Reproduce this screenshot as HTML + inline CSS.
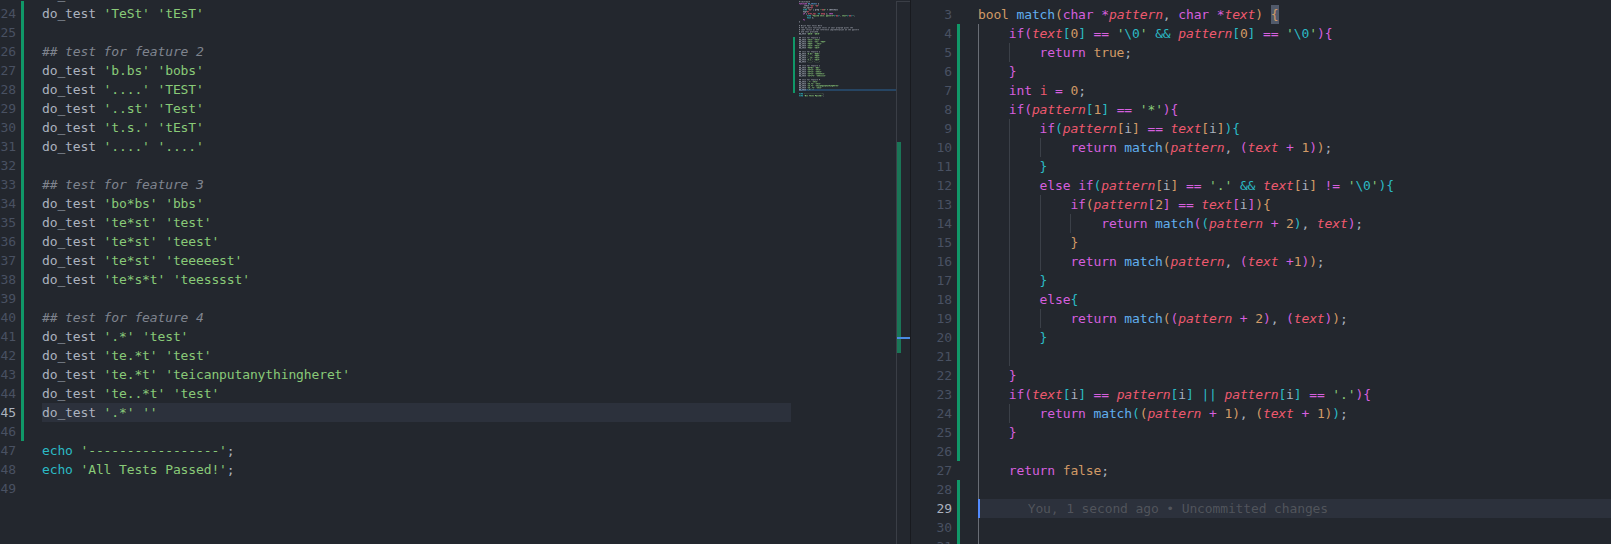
<!DOCTYPE html>
<html lang="en">
<head>
<meta charset="utf-8">
<title>editor</title>
<style>
html,body{margin:0;padding:0;}
body{width:1611px;height:544px;overflow:hidden;background:#23272e;position:relative;
 font-family:"DejaVu Sans Mono","Liberation Mono",monospace;font-size:13px;letter-spacing:-0.127px;color:#abb2bf;}
.abs{position:absolute;}
.ln{position:absolute;height:19px;line-height:19px;white-space:pre;}
.num{color:#495162;text-align:right;}
.num.act{color:#abb2bf;}
.s{color:#89ca78}.c{color:#7f848e;font-style:italic}.e{color:#2bbac5}.k{color:#d55fde}
.f{color:#61afef}.v{color:#ef596f;font-style:italic}.r{color:#ef596f}.n{color:#d19a66}
.b1{color:#d19a66}.b2{color:#d55fde}.b3{color:#2bbac5}
.g{background:#109868;position:absolute;width:3px;}
.ig{position:absolute;width:1px;background:#3b4048;}
.ig.a{background:#696d75;}
.blame{color:rgba(153,153,153,0.35);}
</style>
</head>
<body>
<!-- left editor -->
<div class="abs" style="left:42px;top:403px;width:749px;height:19px;background:#2c313c"></div>
<div class="g" style="left:21px;top:1px;height:440px"></div>
<div class="ln num" style="left:0;width:16px;top:-15px">23</div><div class="ln" style="left:42px;top:-15px">do_test <span class="s">'tesT'</span> <span class="s">'Test'</span></div>
<div class="ln num" style="left:0;width:16px;top:4px">24</div><div class="ln" style="left:42px;top:4px">do_test <span class="s">'TeSt'</span> <span class="s">'tEsT'</span></div>
<div class="ln num" style="left:0;width:16px;top:23px">25</div><div class="ln" style="left:42px;top:23px"></div>
<div class="ln num" style="left:0;width:16px;top:42px">26</div><div class="ln" style="left:42px;top:42px"><span class="c">## test for feature 2</span></div>
<div class="ln num" style="left:0;width:16px;top:61px">27</div><div class="ln" style="left:42px;top:61px">do_test <span class="s">'b.bs'</span> <span class="s">'bobs'</span></div>
<div class="ln num" style="left:0;width:16px;top:80px">28</div><div class="ln" style="left:42px;top:80px">do_test <span class="s">'....'</span> <span class="s">'TEST'</span></div>
<div class="ln num" style="left:0;width:16px;top:99px">29</div><div class="ln" style="left:42px;top:99px">do_test <span class="s">'..st'</span> <span class="s">'Test'</span></div>
<div class="ln num" style="left:0;width:16px;top:118px">30</div><div class="ln" style="left:42px;top:118px">do_test <span class="s">'t.s.'</span> <span class="s">'tEsT'</span></div>
<div class="ln num" style="left:0;width:16px;top:137px">31</div><div class="ln" style="left:42px;top:137px">do_test <span class="s">'....'</span> <span class="s">'....'</span></div>
<div class="ln num" style="left:0;width:16px;top:156px">32</div><div class="ln" style="left:42px;top:156px"></div>
<div class="ln num" style="left:0;width:16px;top:175px">33</div><div class="ln" style="left:42px;top:175px"><span class="c">## test for feature 3</span></div>
<div class="ln num" style="left:0;width:16px;top:194px">34</div><div class="ln" style="left:42px;top:194px">do_test <span class="s">'bo*bs'</span> <span class="s">'bbs'</span></div>
<div class="ln num" style="left:0;width:16px;top:213px">35</div><div class="ln" style="left:42px;top:213px">do_test <span class="s">'te*st'</span> <span class="s">'test'</span></div>
<div class="ln num" style="left:0;width:16px;top:232px">36</div><div class="ln" style="left:42px;top:232px">do_test <span class="s">'te*st'</span> <span class="s">'teest'</span></div>
<div class="ln num" style="left:0;width:16px;top:251px">37</div><div class="ln" style="left:42px;top:251px">do_test <span class="s">'te*st'</span> <span class="s">'teeeeest'</span></div>
<div class="ln num" style="left:0;width:16px;top:270px">38</div><div class="ln" style="left:42px;top:270px">do_test <span class="s">'te*s*t'</span> <span class="s">'teesssst'</span></div>
<div class="ln num" style="left:0;width:16px;top:289px">39</div><div class="ln" style="left:42px;top:289px"></div>
<div class="ln num" style="left:0;width:16px;top:308px">40</div><div class="ln" style="left:42px;top:308px"><span class="c">## test for feature 4</span></div>
<div class="ln num" style="left:0;width:16px;top:327px">41</div><div class="ln" style="left:42px;top:327px">do_test <span class="s">'.*'</span> <span class="s">'test'</span></div>
<div class="ln num" style="left:0;width:16px;top:346px">42</div><div class="ln" style="left:42px;top:346px">do_test <span class="s">'te.*t'</span> <span class="s">'test'</span></div>
<div class="ln num" style="left:0;width:16px;top:365px">43</div><div class="ln" style="left:42px;top:365px">do_test <span class="s">'te.*t'</span> <span class="s">'teicanputanythingheret'</span></div>
<div class="ln num" style="left:0;width:16px;top:384px">44</div><div class="ln" style="left:42px;top:384px">do_test <span class="s">'te..*t'</span> <span class="s">'test'</span></div>
<div class="ln num act" style="left:0;width:16px;top:403px">45</div><div class="ln" style="left:42px;top:403px">do_test <span class="s">'.*'</span> <span class="s">''</span></div>
<div class="ln num" style="left:0;width:16px;top:422px">46</div><div class="ln" style="left:42px;top:422px"></div>
<div class="ln num" style="left:0;width:16px;top:441px">47</div><div class="ln" style="left:42px;top:441px"><span class="e">echo</span> <span class="s">'-----------------'</span>;</div>
<div class="ln num" style="left:0;width:16px;top:460px">48</div><div class="ln" style="left:42px;top:460px"><span class="e">echo</span> <span class="s">'All Tests Passed!'</span>;</div>
<div class="ln num" style="left:0;width:16px;top:479px">49</div><div class="ln" style="left:42px;top:479px"></div>
<!-- minimap -->
<svg class="abs" style="left:0;top:0" width="911" height="544" shape-rendering="crispEdges">
<rect x="799" y="89" width="97" height="2" fill="#264563"/>
<g>
<path fill="#2bbac5" fill-opacity="0.1" d="M817 13h1v1h-1z"/>
<path fill="#2bbac5" fill-opacity="0.2" d="M803 10h3v1h-3zM818 14h2v1h-2zM807 16h3v1h-3zM834 16h1v1h-1zM838 16h1v1h-1zM847 16h1v1h-1zM851 16h1v1h-1zM807 18h1v1h-1zM810 18h1v1h-1zM799 94h3v1h-3zM799 96h3v1h-3z"/>
<path fill="#2bbac5" fill-opacity="0.3" d="M806 10h1v1h-1zM835 15h1v1h-1zM839 15h1v1h-1zM848 15h1v1h-1zM852 15h1v1h-1zM810 16h1v1h-1zM808 18h2v1h-2zM802 94h1v1h-1zM802 96h1v1h-1z"/>
<path fill="#2bbac5" fill-opacity="0.4" d="M804 9h1v1h-1zM808 15h1v1h-1zM834 15h1v1h-1zM838 15h1v1h-1zM847 15h1v1h-1zM851 15h1v1h-1zM809 17h1v1h-1zM800 93h1v1h-1zM800 95h1v1h-1z"/>
<path fill="#2bbac5" fill-opacity="0.5" d="M808 17h1v1h-1zM810 17h1v1h-1z"/>
<path fill="#2bbac5" fill-opacity="0.6" d="M803 9h1v1h-1zM806 9h1v1h-1zM818 13h2v1h-2zM807 15h1v1h-1zM810 15h1v1h-1zM807 17h1v1h-1zM799 93h1v1h-1zM802 93h1v1h-1zM799 95h1v1h-1zM802 95h1v1h-1z"/>
<path fill="#2bbac5" fill-opacity="0.7" d="M805 9h1v1h-1zM809 15h1v1h-1zM801 93h1v1h-1zM801 95h1v1h-1z"/>
<path fill="#61afef" fill-opacity="0.2" d="M811 4h6v1h-6z"/>
<path fill="#61afef" fill-opacity="0.3" d="M808 4h3v1h-3z"/>
<path fill="#61afef" fill-opacity="0.4" d="M813 3h1v1h-1zM815 3h2v1h-2z"/>
<path fill="#61afef" fill-opacity="0.5" d="M811 3h1v1h-1zM814 3h1v1h-1z"/>
<path fill="#61afef" fill-opacity="0.6" d="M809 3h1v1h-1zM812 3h1v1h-1z"/>
<path fill="#61afef" fill-opacity="0.7" d="M808 3h1v1h-1z"/>
<path fill="#7f848e" fill-opacity="0.1" d="M800 2h1v1h-1zM802 26h1v1h-1zM807 26h1v1h-1zM810 26h1v1h-1zM812 26h1v1h-1zM820 26h1v1h-1zM801 28h1v1h-1zM813 28h1v1h-1zM829 28h1v1h-1zM834 28h1v1h-1zM837 28h1v1h-1zM840 28h1v1h-1zM806 30h1v1h-1zM820 30h1v1h-1zM822 30h1v1h-1zM824 30h1v1h-1zM857 30h1v1h-1zM811 32h1v1h-1zM818 32h1v1h-1zM807 38h1v1h-1zM809 38h1v1h-1zM811 38h1v1h-1zM816 38h1v1h-1zM807 52h1v1h-1zM809 52h1v1h-1zM811 52h1v1h-1zM816 52h1v1h-1zM807 66h1v1h-1zM809 66h1v1h-1zM811 66h1v1h-1zM816 66h1v1h-1zM807 80h1v1h-1zM809 80h1v1h-1zM811 80h1v1h-1zM816 80h1v1h-1zM819 80h1v1h-1z"/>
<path fill="#7f848e" fill-opacity="0.2" d="M799 2h1v1h-1zM801 2h1v1h-1zM804 2h2v1h-2zM808 2h2v1h-2zM799 26h1v1h-1zM804 26h2v1h-2zM813 26h4v1h-4zM819 26h1v1h-1zM821 26h1v1h-1zM799 28h1v1h-1zM802 28h2v1h-2zM808 28h4v1h-4zM815 28h3v1h-3zM820 28h1v1h-1zM822 28h5v1h-5zM846 28h3v1h-3zM850 28h3v1h-3zM799 30h1v1h-1zM801 30h1v1h-1zM804 30h1v1h-1zM807 30h2v1h-2zM810 30h2v1h-2zM814 30h1v1h-1zM816 30h3v1h-3zM821 30h1v1h-1zM823 30h1v1h-1zM825 30h4v1h-4zM833 30h2v1h-2zM836 30h3v1h-3zM840 30h1v1h-1zM843 30h1v1h-1zM846 30h1v1h-1zM848 30h3v1h-3zM854 30h3v1h-3zM858 30h1v1h-1zM799 32h1v1h-1zM802 32h1v1h-1zM805 32h2v1h-2zM808 32h1v1h-1zM813 32h1v1h-1zM816 32h1v1h-1zM799 38h2v1h-2zM802 38h4v1h-4zM812 38h1v1h-1zM814 38h1v1h-1zM817 38h1v1h-1zM799 52h2v1h-2zM802 52h4v1h-4zM812 52h1v1h-1zM814 52h1v1h-1zM817 52h1v1h-1zM799 66h2v1h-2zM802 66h4v1h-4zM812 66h1v1h-1zM814 66h1v1h-1zM817 66h1v1h-1zM799 80h2v1h-2zM802 80h4v1h-4zM812 80h1v1h-1zM814 80h1v1h-1zM817 80h1v1h-1z"/>
<path fill="#7f848e" fill-opacity="0.3" d="M800 1h1v1h-1zM802 2h2v1h-2zM806 2h1v1h-1zM801 26h1v1h-1zM803 26h1v1h-1zM808 26h2v1h-2zM818 26h1v1h-1zM805 28h3v1h-3zM814 28h1v1h-1zM818 28h2v1h-2zM828 28h1v1h-1zM831 28h3v1h-3zM838 28h1v1h-1zM842 28h1v1h-1zM845 28h1v1h-1zM803 30h1v1h-1zM809 30h1v1h-1zM830 30h2v1h-2zM835 30h1v1h-1zM841 30h2v1h-2zM845 30h1v1h-1zM803 32h1v1h-1zM807 32h1v1h-1zM812 32h1v1h-1zM814 32h2v1h-2zM817 32h1v1h-1zM808 38h1v1h-1zM815 38h1v1h-1zM819 38h1v1h-1zM808 52h1v1h-1zM815 52h1v1h-1zM819 52h1v1h-1zM808 66h1v1h-1zM815 66h1v1h-1zM819 66h1v1h-1zM808 80h1v1h-1zM815 80h1v1h-1z"/>
<path fill="#7f848e" fill-opacity="0.4" d="M801 1h1v1h-1zM803 1h1v1h-1zM805 1h1v1h-1zM808 1h1v1h-1zM807 2h1v1h-1zM802 25h2v1h-2zM810 25h1v1h-1zM814 25h1v1h-1zM816 25h1v1h-1zM820 25h1v1h-1zM810 27h1v1h-1zM816 27h1v1h-1zM818 27h1v1h-1zM824 27h1v1h-1zM826 27h1v1h-1zM828 27h1v1h-1zM834 27h1v1h-1zM837 27h1v1h-1zM840 27h1v1h-1zM845 27h1v1h-1zM848 27h1v1h-1zM841 28h1v1h-1zM801 29h1v1h-1zM806 29h1v1h-1zM808 29h1v1h-1zM810 29h1v1h-1zM814 29h1v1h-1zM820 29h1v1h-1zM824 29h1v1h-1zM827 29h1v1h-1zM830 29h1v1h-1zM833 29h1v1h-1zM841 29h1v1h-1zM857 29h1v1h-1zM802 30h1v1h-1zM813 30h1v1h-1zM839 30h1v1h-1zM853 30h1v1h-1zM811 31h1v1h-1zM814 31h1v1h-1zM801 32h1v1h-1zM804 37h1v1h-1zM809 37h1v1h-1zM816 37h1v1h-1zM813 38h1v1h-1zM804 51h1v1h-1zM809 51h1v1h-1zM816 51h1v1h-1zM813 52h1v1h-1zM804 65h1v1h-1zM809 65h1v1h-1zM816 65h1v1h-1zM813 66h1v1h-1zM804 79h1v1h-1zM809 79h1v1h-1zM816 79h1v1h-1zM813 80h1v1h-1z"/>
<path fill="#7f848e" fill-opacity="0.5" d="M804 25h1v1h-1zM809 25h1v1h-1zM815 25h1v1h-1zM808 27h1v1h-1zM811 27h1v1h-1zM814 27h1v1h-1zM817 27h1v1h-1zM822 27h1v1h-1zM825 27h1v1h-1zM831 27h1v1h-1zM833 27h1v1h-1zM846 27h1v1h-1zM850 27h1v1h-1zM836 28h1v1h-1zM839 28h1v1h-1zM844 28h1v1h-1zM809 29h1v1h-1zM811 29h1v1h-1zM816 29h1v1h-1zM838 29h1v1h-1zM840 29h1v1h-1zM848 29h1v1h-1zM854 29h2v1h-2zM832 30h1v1h-1zM852 30h1v1h-1zM805 31h1v1h-1zM807 31h2v1h-2zM813 31h1v1h-1zM810 32h1v1h-1zM802 37h1v1h-1zM805 37h1v1h-1zM814 37h2v1h-2zM819 37h1v1h-1zM802 51h1v1h-1zM805 51h1v1h-1zM814 51h2v1h-2zM802 65h1v1h-1zM805 65h1v1h-1zM814 65h2v1h-2zM802 79h1v1h-1zM805 79h1v1h-1zM814 79h2v1h-2z"/>
<path fill="#7f848e" fill-opacity="0.6" d="M804 1h1v1h-1zM807 1h1v1h-1zM805 25h1v1h-1zM808 25h1v1h-1zM812 25h2v1h-2zM819 25h1v1h-1zM821 25h1v1h-1zM801 27h1v1h-1zM803 27h1v1h-1zM806 27h1v1h-1zM809 27h1v1h-1zM813 27h1v1h-1zM815 27h1v1h-1zM819 27h2v1h-2zM823 27h1v1h-1zM829 27h1v1h-1zM832 27h1v1h-1zM836 27h1v1h-1zM838 27h2v1h-2zM841 27h1v1h-1zM844 27h1v1h-1zM847 27h1v1h-1zM852 27h1v1h-1zM802 29h1v1h-1zM804 29h1v1h-1zM807 29h1v1h-1zM813 29h1v1h-1zM818 29h1v1h-1zM821 29h3v1h-3zM825 29h2v1h-2zM828 29h1v1h-1zM832 29h1v1h-1zM834 29h1v1h-1zM836 29h2v1h-2zM839 29h1v1h-1zM842 29h2v1h-2zM845 29h2v1h-2zM850 29h1v1h-1zM852 29h2v1h-2zM856 29h1v1h-1zM858 29h1v1h-1zM801 31h2v1h-2zM806 31h1v1h-1zM810 31h1v1h-1zM812 31h1v1h-1zM816 31h1v1h-1zM803 37h1v1h-1zM807 37h2v1h-2zM811 37h3v1h-3zM817 37h1v1h-1zM803 51h1v1h-1zM807 51h2v1h-2zM811 51h3v1h-3zM817 51h1v1h-1zM819 51h1v1h-1zM803 65h1v1h-1zM807 65h2v1h-2zM811 65h3v1h-3zM817 65h1v1h-1zM819 65h1v1h-1zM803 79h1v1h-1zM807 79h2v1h-2zM811 79h3v1h-3zM817 79h1v1h-1z"/>
<path fill="#7f848e" fill-opacity="0.7" d="M802 1h1v1h-1zM806 1h1v1h-1zM809 1h1v1h-1zM807 25h1v1h-1zM802 27h1v1h-1zM805 27h1v1h-1zM842 27h1v1h-1zM851 27h1v1h-1zM803 29h1v1h-1zM817 29h1v1h-1zM831 29h1v1h-1zM835 29h1v1h-1zM849 29h1v1h-1zM803 31h1v1h-1zM815 31h1v1h-1zM817 31h1v1h-1z"/>
<path fill="#7f848e" fill-opacity="0.9" d="M799 1h1v1h-1zM799 25h1v1h-1zM818 25h1v1h-1zM799 27h1v1h-1zM799 29h1v1h-1zM799 31h1v1h-1zM799 37h2v1h-2zM799 51h2v1h-2zM799 65h2v1h-2zM799 79h2v1h-2zM819 79h1v1h-1z"/>
<path fill="#7f848e" fill-opacity="1.0" d="M801 25h1v1h-1z"/>
<path fill="#89ca78" fill-opacity="0.1" d="M824 15h1v1h-1zM813 16h1v1h-1zM824 16h1v1h-1zM831 16h1v1h-1zM821 42h1v1h-1zM824 42h1v1h-1zM808 44h1v1h-1zM811 44h1v1h-1zM811 46h1v1h-1zM815 46h1v1h-1zM808 48h1v1h-1zM818 48h1v1h-1zM809 54h1v1h-1zM808 56h4v1h-4zM815 56h1v1h-1zM818 56h1v1h-1zM808 58h2v1h-2zM815 58h1v1h-1zM809 60h1v1h-1zM811 60h1v1h-1zM818 60h1v1h-1zM808 62h4v1h-4zM815 62h4v1h-4zM808 82h1v1h-1zM810 84h1v1h-1zM810 86h1v1h-1zM835 86h1v1h-1zM810 88h2v1h-2zM808 90h1v1h-1zM805 93h17v1h-17zM809 96h1v1h-1zM815 96h1v1h-1zM821 96h1v1h-1z"/>
<path fill="#89ca78" fill-opacity="0.2" d="M816 16h2v1h-2zM820 16h4v1h-4zM828 16h3v1h-3zM832 16h1v1h-1zM840 16h1v1h-1zM842 16h2v1h-2zM845 16h1v1h-1zM807 33h1v1h-1zM812 33h1v1h-1zM814 33h1v1h-1zM819 33h1v1h-1zM810 34h1v1h-1zM817 34h1v1h-1zM807 39h1v1h-1zM812 39h1v1h-1zM814 39h1v1h-1zM819 39h1v1h-1zM808 40h4v1h-4zM815 40h4v1h-4zM807 41h1v1h-1zM812 41h1v1h-1zM814 41h1v1h-1zM818 41h1v1h-1zM820 41h1v1h-1zM825 41h1v1h-1zM808 42h4v1h-4zM815 42h3v1h-3zM807 43h1v1h-1zM812 43h1v1h-1zM816 43h1v1h-1zM821 43h1v1h-1zM817 44h4v1h-4zM807 45h1v1h-1zM812 45h1v1h-1zM814 45h1v1h-1zM819 45h1v1h-1zM808 46h3v1h-3zM816 46h3v1h-3zM807 47h1v1h-1zM812 47h1v1h-1zM814 47h1v1h-1zM819 47h1v1h-1zM809 48h1v1h-1zM811 48h1v1h-1zM815 48h1v1h-1zM817 48h1v1h-1zM807 53h1v1h-1zM812 53h1v1h-1zM814 53h1v1h-1zM819 53h1v1h-1zM811 54h1v1h-1zM818 54h1v1h-1zM807 55h1v1h-1zM812 55h1v1h-1zM814 55h1v1h-1zM819 55h1v1h-1zM807 57h1v1h-1zM812 57h1v1h-1zM814 57h1v1h-1zM819 57h1v1h-1zM810 58h2v1h-2zM816 58h3v1h-3zM807 59h1v1h-1zM812 59h1v1h-1zM814 59h1v1h-1zM819 59h1v1h-1zM808 60h1v1h-1zM810 60h1v1h-1zM815 60h1v1h-1zM817 60h1v1h-1zM807 61h1v1h-1zM812 61h1v1h-1zM814 61h1v1h-1zM819 61h1v1h-1zM807 67h1v1h-1zM813 67h1v1h-1zM815 67h1v1h-1zM819 67h1v1h-1zM812 68h1v1h-1zM818 68h1v1h-1zM807 69h1v1h-1zM813 69h1v1h-1zM815 69h1v1h-1zM820 69h1v1h-1zM808 70h2v1h-2zM811 70h2v1h-2zM816 70h4v1h-4zM807 71h1v1h-1zM813 71h1v1h-1zM815 71h1v1h-1zM821 71h1v1h-1zM808 72h2v1h-2zM811 72h2v1h-2zM816 72h5v1h-5zM807 73h1v1h-1zM813 73h1v1h-1zM815 73h1v1h-1zM824 73h1v1h-1zM808 74h2v1h-2zM811 74h2v1h-2zM816 74h8v1h-8zM807 75h1v1h-1zM814 75h1v1h-1zM816 75h1v1h-1zM825 75h1v1h-1zM808 76h2v1h-2zM811 76h1v1h-1zM813 76h1v1h-1zM817 76h8v1h-8zM807 81h1v1h-1zM810 81h1v1h-1zM812 81h1v1h-1zM817 81h1v1h-1zM813 82h4v1h-4zM807 83h1v1h-1zM813 83h1v1h-1zM815 83h1v1h-1zM820 83h1v1h-1zM808 84h2v1h-2zM812 84h1v1h-1zM816 84h4v1h-4zM807 85h1v1h-1zM813 85h1v1h-1zM815 85h1v1h-1zM838 85h1v1h-1zM808 86h2v1h-2zM812 86h1v1h-1zM816 86h2v1h-2zM819 86h1v1h-1zM821 86h1v1h-1zM824 86h1v1h-1zM826 86h1v1h-1zM828 86h2v1h-2zM831 86h1v1h-1zM833 86h2v1h-2zM836 86h2v1h-2zM807 87h1v1h-1zM814 87h1v1h-1zM816 87h1v1h-1zM821 87h1v1h-1zM808 88h2v1h-2zM813 88h1v1h-1zM817 88h4v1h-4zM807 89h1v1h-1zM810 89h1v1h-1zM812 89h2v1h-2zM804 93h1v1h-1zM822 93h1v1h-1zM804 95h1v1h-1zM822 95h1v1h-1zM806 96h2v1h-2zM810 96h4v1h-4zM817 96h3v1h-3z"/>
<path fill="#89ca78" fill-opacity="0.3" d="M810 5h1v1h-1zM813 5h1v1h-1zM815 5h1v1h-1zM818 5h1v1h-1zM808 9h1v1h-1zM811 9h1v1h-1zM820 9h2v1h-2zM825 9h1v1h-1zM824 10h1v1h-1zM812 15h1v1h-1zM853 15h1v1h-1zM815 16h1v1h-1zM818 16h1v1h-1zM844 16h1v1h-1zM809 34h1v1h-1zM811 34h1v1h-1zM816 34h1v1h-1zM818 34h1v1h-1zM822 42h2v1h-2zM809 44h2v1h-2zM810 48h1v1h-1zM816 48h1v1h-1zM808 54h1v1h-1zM810 54h1v1h-1zM815 54h3v1h-3zM816 56h2v1h-2zM816 60h1v1h-1zM808 68h2v1h-2zM811 68h1v1h-1zM816 68h2v1h-2zM818 86h1v1h-1zM823 86h1v1h-1zM827 86h1v1h-1zM830 86h1v1h-1zM821 95h1v1h-1zM805 96h1v1h-1zM820 96h1v1h-1z"/>
<path fill="#89ca78" fill-opacity="0.4" d="M815 15h2v1h-2zM822 15h1v1h-1zM831 15h1v1h-1zM814 16h1v1h-1zM827 16h1v1h-1zM810 33h1v1h-1zM817 33h1v1h-1zM808 34h1v1h-1zM815 34h1v1h-1zM810 39h1v1h-1zM817 39h1v1h-1zM810 41h1v1h-1zM817 41h1v1h-1zM819 43h1v1h-1zM810 45h1v1h-1zM817 45h1v1h-1zM817 47h1v1h-1zM811 53h1v1h-1zM818 53h1v1h-1zM810 57h1v1h-1zM817 57h1v1h-1zM810 59h1v1h-1zM817 59h1v1h-1zM812 67h1v1h-1zM818 67h1v1h-1zM811 69h1v1h-1zM818 69h1v1h-1zM811 71h1v1h-1zM819 71h1v1h-1zM811 73h1v1h-1zM822 73h1v1h-1zM811 75h1v1h-1zM820 75h4v1h-4zM815 81h1v1h-1zM818 83h1v1h-1zM818 85h2v1h-2zM830 85h1v1h-1zM835 85h1v1h-1zM820 86h1v1h-1zM825 86h1v1h-1zM819 87h1v1h-1zM806 95h2v1h-2zM811 95h1v1h-1zM813 95h1v1h-1zM817 95h2v1h-2zM816 96h1v1h-1z"/>
<path fill="#89ca78" fill-opacity="0.5" d="M820 15h1v1h-1zM823 15h1v1h-1zM828 15h2v1h-2zM833 15h1v1h-1zM842 15h1v1h-1zM844 15h3v1h-3zM826 16h1v1h-1zM808 39h1v1h-1zM811 39h1v1h-1zM815 39h1v1h-1zM818 39h1v1h-1zM808 41h1v1h-1zM811 41h1v1h-1zM815 41h1v1h-1zM817 43h1v1h-1zM820 43h1v1h-1zM808 45h1v1h-1zM818 45h1v1h-1zM811 47h1v1h-1zM815 47h1v1h-1zM811 57h1v1h-1zM818 57h1v1h-1zM808 59h1v1h-1zM815 59h1v1h-1zM810 67h1v1h-1zM808 69h1v1h-1zM810 69h1v1h-1zM812 69h1v1h-1zM816 69h1v1h-1zM819 69h1v1h-1zM808 71h1v1h-1zM810 71h1v1h-1zM812 71h1v1h-1zM816 71h1v1h-1zM820 71h1v1h-1zM808 73h1v1h-1zM810 73h1v1h-1zM812 73h1v1h-1zM816 73h1v1h-1zM823 73h1v1h-1zM808 75h1v1h-1zM810 75h1v1h-1zM812 75h2v1h-2zM817 75h1v1h-1zM824 75h1v1h-1zM809 81h1v1h-1zM813 81h1v1h-1zM816 81h1v1h-1zM808 83h1v1h-1zM811 83h2v1h-2zM816 83h1v1h-1zM819 83h1v1h-1zM808 85h1v1h-1zM811 85h2v1h-2zM816 85h1v1h-1zM823 85h2v1h-2zM827 85h2v1h-2zM837 85h1v1h-1zM822 86h1v1h-1zM832 86h1v1h-1zM808 87h1v1h-1zM812 87h2v1h-2zM817 87h1v1h-1zM820 87h1v1h-1zM809 89h1v1h-1zM812 95h1v1h-1z"/>
<path fill="#89ca78" fill-opacity="0.6" d="M824 9h1v1h-1zM814 15h1v1h-1zM817 15h1v1h-1zM821 15h1v1h-1zM826 15h2v1h-2zM830 15h1v1h-1zM832 15h1v1h-1zM843 15h1v1h-1zM808 33h1v1h-1zM815 33h1v1h-1zM809 39h1v1h-1zM816 39h1v1h-1zM809 41h1v1h-1zM816 41h1v1h-1zM821 41h1v1h-1zM823 41h2v1h-2zM808 43h1v1h-1zM810 43h2v1h-2zM818 43h1v1h-1zM809 45h1v1h-1zM811 45h1v1h-1zM815 45h2v1h-2zM808 47h3v1h-3zM818 47h1v1h-1zM816 53h1v1h-1zM815 55h1v1h-1zM817 55h2v1h-2zM815 57h2v1h-2zM818 59h1v1h-1zM809 67h1v1h-1zM809 69h1v1h-1zM817 69h1v1h-1zM809 71h1v1h-1zM817 71h2v1h-2zM809 73h1v1h-1zM817 73h5v1h-5zM809 75h1v1h-1zM818 75h2v1h-2zM814 81h1v1h-1zM809 83h1v1h-1zM817 83h1v1h-1zM809 85h1v1h-1zM817 85h1v1h-1zM820 85h3v1h-3zM825 85h2v1h-2zM831 85h2v1h-2zM834 85h1v1h-1zM836 85h1v1h-1zM809 87h1v1h-1zM818 87h1v1h-1zM809 95h2v1h-2zM816 95h1v1h-1zM819 95h1v1h-1z"/>
<path fill="#89ca78" fill-opacity="0.7" d="M813 15h1v1h-1zM818 15h1v1h-1zM809 33h1v1h-1zM811 33h1v1h-1zM816 33h1v1h-1zM818 33h1v1h-1zM822 41h1v1h-1zM809 43h1v1h-1zM816 47h1v1h-1zM808 53h1v1h-1zM810 53h1v1h-1zM815 53h1v1h-1zM817 53h1v1h-1zM816 55h1v1h-1zM816 59h1v1h-1zM808 67h1v1h-1zM811 67h1v1h-1zM816 67h2v1h-2zM829 85h1v1h-1zM833 85h1v1h-1zM820 95h1v1h-1z"/>
<path fill="#89ca78" fill-opacity="0.9" d="M805 95h1v1h-1zM815 95h1v1h-1z"/>
<path fill="#abb2bf" fill-opacity="0.1" d="M803 6h1v1h-1zM803 8h1v1h-1zM816 10h1v1h-1zM827 10h1v1h-1zM827 13h1v1h-1zM854 15h1v1h-1zM813 17h1v1h-1zM823 93h1v1h-1zM823 95h1v1h-1z"/>
<path fill="#abb2bf" fill-opacity="0.2" d="M804 6h5v1h-5zM804 8h2v1h-2zM807 8h1v1h-1zM809 8h1v1h-1zM817 10h1v1h-1zM829 10h1v1h-1zM831 10h4v1h-4zM836 10h2v1h-2zM803 12h1v1h-1zM827 14h1v1h-1zM854 16h1v1h-1zM813 18h1v1h-1zM802 34h4v1h-4zM802 40h4v1h-4zM802 42h4v1h-4zM802 44h4v1h-4zM802 46h4v1h-4zM802 48h4v1h-4zM802 54h4v1h-4zM802 56h4v1h-4zM802 58h4v1h-4zM802 60h4v1h-4zM802 62h4v1h-4zM802 68h4v1h-4zM802 70h4v1h-4zM802 72h4v1h-4zM802 74h4v1h-4zM802 76h4v1h-4zM802 82h4v1h-4zM802 84h4v1h-4zM802 86h4v1h-4zM802 88h4v1h-4zM802 90h4v1h-4zM823 94h1v1h-1zM823 96h1v1h-1z"/>
<path fill="#abb2bf" fill-opacity="0.3" d="M818 4h1v1h-1zM806 8h1v1h-1zM813 9h1v1h-1zM813 10h1v1h-1zM830 10h1v1h-1zM835 10h1v1h-1zM804 12h1v1h-1zM806 14h1v1h-1zM826 14h1v1h-1zM812 18h1v1h-1zM799 22h1v1h-1zM799 34h3v1h-3zM799 40h3v1h-3zM799 42h3v1h-3zM799 44h3v1h-3zM799 46h3v1h-3zM799 48h3v1h-3zM799 54h3v1h-3zM799 56h3v1h-3zM799 58h3v1h-3zM799 60h3v1h-3zM799 62h3v1h-3zM799 68h3v1h-3zM799 70h3v1h-3zM799 72h3v1h-3zM799 74h3v1h-3zM799 76h3v1h-3zM799 82h3v1h-3zM799 84h3v1h-3zM799 86h3v1h-3zM799 88h3v1h-3zM799 90h3v1h-3z"/>
<path fill="#abb2bf" fill-opacity="0.4" d="M804 5h1v1h-1zM807 5h1v1h-1zM803 7h1v1h-1zM809 7h1v1h-1zM808 8h1v1h-1zM816 9h1v1h-1zM829 9h1v1h-1zM833 9h1v1h-1zM836 9h2v1h-2zM806 13h1v1h-1zM826 13h1v1h-1zM804 33h1v1h-1zM804 39h1v1h-1zM804 41h1v1h-1zM804 43h1v1h-1zM804 45h1v1h-1zM804 47h1v1h-1zM804 53h1v1h-1zM804 55h1v1h-1zM804 57h1v1h-1zM804 59h1v1h-1zM804 61h1v1h-1zM804 67h1v1h-1zM804 69h1v1h-1zM804 71h1v1h-1zM804 73h1v1h-1zM804 75h1v1h-1zM804 81h1v1h-1zM804 83h1v1h-1zM804 85h1v1h-1zM804 87h1v1h-1zM804 89h1v1h-1z"/>
<path fill="#abb2bf" fill-opacity="0.5" d="M818 3h1v1h-1zM805 5h1v1h-1zM808 5h1v1h-1zM805 7h1v1h-1zM807 7h1v1h-1zM810 7h1v1h-1zM827 9h1v1h-1zM832 9h1v1h-1zM835 9h1v1h-1zM815 10h1v1h-1zM818 10h1v1h-1zM804 11h1v1h-1zM806 11h1v1h-1zM805 12h1v1h-1zM812 17h1v1h-1zM799 21h1v1h-1zM802 33h1v1h-1zM805 33h1v1h-1zM802 39h1v1h-1zM805 39h1v1h-1zM802 41h1v1h-1zM805 41h1v1h-1zM802 43h1v1h-1zM805 43h1v1h-1zM802 45h1v1h-1zM805 45h1v1h-1zM802 47h1v1h-1zM805 47h1v1h-1zM802 53h1v1h-1zM805 53h1v1h-1zM802 55h1v1h-1zM805 55h1v1h-1zM802 57h1v1h-1zM805 57h1v1h-1zM802 59h1v1h-1zM805 59h1v1h-1zM802 61h1v1h-1zM805 61h1v1h-1zM802 67h1v1h-1zM805 67h1v1h-1zM802 69h1v1h-1zM805 69h1v1h-1zM802 71h1v1h-1zM805 71h1v1h-1zM802 73h1v1h-1zM805 73h1v1h-1zM802 75h1v1h-1zM805 75h1v1h-1zM802 81h1v1h-1zM805 81h1v1h-1zM802 83h1v1h-1zM805 83h1v1h-1zM802 85h1v1h-1zM805 85h1v1h-1zM802 87h1v1h-1zM805 87h1v1h-1zM802 89h1v1h-1zM805 89h1v1h-1z"/>
<path fill="#abb2bf" fill-opacity="0.6" d="M806 5h1v1h-1zM804 7h1v1h-1zM808 7h1v1h-1zM815 9h1v1h-1zM817 9h2v1h-2zM831 9h1v1h-1zM834 9h1v1h-1zM803 11h1v1h-1zM805 11h1v1h-1zM800 33h1v1h-1zM803 33h1v1h-1zM800 39h1v1h-1zM803 39h1v1h-1zM800 41h1v1h-1zM803 41h1v1h-1zM800 43h1v1h-1zM803 43h1v1h-1zM800 45h1v1h-1zM803 45h1v1h-1zM800 47h1v1h-1zM803 47h1v1h-1zM800 53h1v1h-1zM803 53h1v1h-1zM800 55h1v1h-1zM803 55h1v1h-1zM800 57h1v1h-1zM803 57h1v1h-1zM800 59h1v1h-1zM803 59h1v1h-1zM800 61h1v1h-1zM803 61h1v1h-1zM800 67h1v1h-1zM803 67h1v1h-1zM800 69h1v1h-1zM803 69h1v1h-1zM800 71h1v1h-1zM803 71h1v1h-1zM800 73h1v1h-1zM803 73h1v1h-1zM800 75h1v1h-1zM803 75h1v1h-1zM800 81h1v1h-1zM803 81h1v1h-1zM800 83h1v1h-1zM803 83h1v1h-1zM800 85h1v1h-1zM803 85h1v1h-1zM800 87h1v1h-1zM803 87h1v1h-1zM800 89h1v1h-1zM803 89h1v1h-1z"/>
<path fill="#abb2bf" fill-opacity="0.7" d="M830 9h1v1h-1zM799 33h1v1h-1zM799 39h1v1h-1zM799 41h1v1h-1zM799 43h1v1h-1zM799 45h1v1h-1zM799 47h1v1h-1zM799 53h1v1h-1zM799 55h1v1h-1zM799 57h1v1h-1zM799 59h1v1h-1zM799 61h1v1h-1zM799 67h1v1h-1zM799 69h1v1h-1zM799 71h1v1h-1zM799 73h1v1h-1zM799 75h1v1h-1zM799 81h1v1h-1zM799 83h1v1h-1zM799 85h1v1h-1zM799 87h1v1h-1zM799 89h1v1h-1z"/>
<path fill="#d55fde" fill-opacity="0.1" d="M799 4h1v1h-1zM804 14h1v1h-1zM803 20h1v1h-1z"/>
<path fill="#d55fde" fill-opacity="0.2" d="M801 4h3v1h-3zM806 4h1v1h-1zM829 14h4v1h-4z"/>
<path fill="#d55fde" fill-opacity="0.3" d="M800 4h1v1h-1zM804 4h2v1h-2zM803 14h1v1h-1zM804 20h1v1h-1z"/>
<path fill="#d55fde" fill-opacity="0.4" d="M802 3h1v1h-1zM804 3h1v1h-1zM803 13h1v1h-1zM804 19h1v1h-1z"/>
<path fill="#d55fde" fill-opacity="0.5" d="M800 3h1v1h-1zM803 3h1v1h-1zM829 13h1v1h-1z"/>
<path fill="#d55fde" fill-opacity="0.6" d="M799 3h1v1h-1zM801 3h1v1h-1zM805 3h2v1h-2zM804 13h1v1h-1zM831 13h2v1h-2zM803 19h1v1h-1z"/>
<path fill="#d55fde" fill-opacity="0.7" d="M830 13h1v1h-1z"/>
<path fill="#ef596f" fill-opacity="0.1" d="M812 8h1v1h-1zM808 12h1v1h-1zM809 14h1v1h-1z"/>
<path fill="#ef596f" fill-opacity="0.2" d="M810 14h2v1h-2zM813 14h1v1h-1zM815 14h1v1h-1zM822 14h1v1h-1z"/>
<path fill="#ef596f" fill-opacity="0.3" d="M811 6h2v1h-2zM816 6h2v1h-2zM811 8h1v1h-1zM809 10h2v1h-2zM822 10h2v1h-2zM807 12h1v1h-1zM808 14h1v1h-1zM812 14h1v1h-1zM821 14h1v1h-1zM823 14h1v1h-1zM836 16h2v1h-2zM849 16h2v1h-2z"/>
<path fill="#ef596f" fill-opacity="0.4" d="M809 13h1v1h-1zM815 13h1v1h-1zM814 14h1v1h-1z"/>
<path fill="#ef596f" fill-opacity="0.5" d="M812 5h1v1h-1zM812 7h1v1h-1zM810 9h1v1h-1zM808 11h1v1h-1zM811 13h1v1h-1zM813 13h1v1h-1zM823 13h1v1h-1zM824 14h1v1h-1zM837 15h1v1h-1z"/>
<path fill="#ef596f" fill-opacity="0.6" d="M811 5h1v1h-1zM816 5h2v1h-2zM811 7h1v1h-1zM809 9h1v1h-1zM822 9h2v1h-2zM807 11h1v1h-1zM808 13h1v1h-1zM810 13h1v1h-1zM814 13h1v1h-1zM821 13h2v1h-2zM824 13h1v1h-1zM836 15h1v1h-1zM849 15h2v1h-2z"/>
</g>
<rect x="793" y="37" width="2" height="56" fill="#109868"/>
<rect x="896" y="1" width="1" height="543" fill="#3a3e46"/>
<rect x="896" y="1" width="14" height="1" fill="#3a3e46"/>
<rect x="897" y="142" width="4" height="211" fill="#1a7556"/>
<rect x="897" y="337" width="13" height="2" fill="#4a8be3"/>
<rect x="910" y="0" width="1" height="544" fill="#181a1f"/>
</svg>
<!-- right editor -->
<div class="abs" style="left:978px;top:499px;width:633px;height:19px;background:#2c313c"></div>
<div class="abs" style="left:1271px;top:5px;width:8px;height:19px;background:#515a6b"></div>
<div class="g" style="left:957px;top:24px;height:437px"></div>
<div class="g" style="left:957px;top:480px;height:64px"></div>
<div class="ig a" style="left:978px;top:24px;height:532px"></div>
<div class="ig" style="left:1009px;top:43px;height:19px"></div>
<div class="ig" style="left:1009px;top:119px;height:247px"></div>
<div class="ig" style="left:1009px;top:404px;height:19px"></div>
<div class="ig" style="left:1040px;top:138px;height:19px"></div>
<div class="ig" style="left:1040px;top:195px;height:76px"></div>
<div class="ig" style="left:1040px;top:309px;height:19px"></div>
<div class="ig" style="left:1070px;top:214px;height:19px"></div>
<div class="ln num" style="left:921px;width:31px;top:5px">3</div><div class="ln" style="left:978px;top:5px"><span class="n">bool</span> <span class="f">match</span><span class="b1">(</span><span class="k">char</span> <span class="k">*</span><span class="v">pattern</span>, <span class="k">char</span> <span class="k">*</span><span class="v">text</span><span class="b1">)</span> <span class="b1">{</span></div>
<div class="ln num" style="left:921px;width:31px;top:24px">4</div><div class="ln" style="left:978px;top:24px">    <span class="k">if</span><span class="b2">(</span><span class="v">text</span><span class="b3">[</span><span class="n">0</span><span class="b3">]</span> <span class="k">==</span> <span class="s">'</span><span class="e">\0</span><span class="s">'</span> <span class="e">&amp;&amp;</span> <span class="v">pattern</span><span class="b3">[</span><span class="n">0</span><span class="b3">]</span> <span class="k">==</span> <span class="s">'</span><span class="e">\0</span><span class="s">'</span><span class="b2">)</span><span class="b2">{</span></div>
<div class="ln num" style="left:921px;width:31px;top:43px">5</div><div class="ln" style="left:978px;top:43px">        <span class="k">return</span> <span class="n">true</span>;</div>
<div class="ln num" style="left:921px;width:31px;top:62px">6</div><div class="ln" style="left:978px;top:62px">    <span class="b2">}</span></div>
<div class="ln num" style="left:921px;width:31px;top:81px">7</div><div class="ln" style="left:978px;top:81px">    <span class="k">int</span> <span class="r">i</span> <span class="k">=</span> <span class="n">0</span>;</div>
<div class="ln num" style="left:921px;width:31px;top:100px">8</div><div class="ln" style="left:978px;top:100px">    <span class="k">if</span><span class="b2">(</span><span class="v">pattern</span><span class="b3">[</span><span class="n">1</span><span class="b3">]</span> <span class="k">==</span> <span class="s">'</span><span class="s">*</span><span class="s">'</span><span class="b2">)</span><span class="b2">{</span></div>
<div class="ln num" style="left:921px;width:31px;top:119px">9</div><div class="ln" style="left:978px;top:119px">        <span class="k">if</span><span class="b3">(</span><span class="v">pattern</span><span class="b1">[</span>i<span class="b1">]</span> <span class="k">==</span> <span class="v">text</span><span class="b1">[</span>i<span class="b1">]</span><span class="b3">)</span><span class="b3">{</span></div>
<div class="ln num" style="left:921px;width:31px;top:138px">10</div><div class="ln" style="left:978px;top:138px">            <span class="k">return</span> <span class="f">match</span><span class="b1">(</span><span class="v">pattern</span>, <span class="b2">(</span><span class="v">text</span> <span class="k">+</span> <span class="n">1</span><span class="b2">)</span><span class="b1">)</span>;</div>
<div class="ln num" style="left:921px;width:31px;top:157px">11</div><div class="ln" style="left:978px;top:157px">        <span class="b3">}</span></div>
<div class="ln num" style="left:921px;width:31px;top:176px">12</div><div class="ln" style="left:978px;top:176px">        <span class="k">else</span> <span class="k">if</span><span class="b3">(</span><span class="v">pattern</span><span class="b1">[</span>i<span class="b1">]</span> <span class="k">==</span> <span class="s">'</span><span class="s">.</span><span class="s">'</span> <span class="e">&amp;&amp;</span> <span class="v">text</span><span class="b1">[</span>i<span class="b1">]</span> <span class="k">!=</span> <span class="s">'</span><span class="e">\0</span><span class="s">'</span><span class="b3">)</span><span class="b3">{</span></div>
<div class="ln num" style="left:921px;width:31px;top:195px">13</div><div class="ln" style="left:978px;top:195px">            <span class="k">if</span><span class="b1">(</span><span class="v">pattern</span><span class="b2">[</span><span class="n">2</span><span class="b2">]</span> <span class="k">==</span> <span class="v">text</span><span class="b2">[</span>i<span class="b2">]</span><span class="b1">)</span><span class="b1">{</span></div>
<div class="ln num" style="left:921px;width:31px;top:214px">14</div><div class="ln" style="left:978px;top:214px">                <span class="k">return</span> <span class="f">match</span><span class="b2">(</span><span class="b3">(</span><span class="v">pattern</span> <span class="k">+</span> <span class="n">2</span><span class="b3">)</span>, <span class="v">text</span><span class="b2">)</span>;</div>
<div class="ln num" style="left:921px;width:31px;top:233px">15</div><div class="ln" style="left:978px;top:233px">            <span class="b1">}</span></div>
<div class="ln num" style="left:921px;width:31px;top:252px">16</div><div class="ln" style="left:978px;top:252px">            <span class="k">return</span> <span class="f">match</span><span class="b1">(</span><span class="v">pattern</span>, <span class="b2">(</span><span class="v">text</span> <span class="k">+</span><span class="n">1</span><span class="b2">)</span><span class="b1">)</span>;</div>
<div class="ln num" style="left:921px;width:31px;top:271px">17</div><div class="ln" style="left:978px;top:271px">        <span class="b3">}</span></div>
<div class="ln num" style="left:921px;width:31px;top:290px">18</div><div class="ln" style="left:978px;top:290px">        <span class="k">else</span><span class="b3">{</span></div>
<div class="ln num" style="left:921px;width:31px;top:309px">19</div><div class="ln" style="left:978px;top:309px">            <span class="k">return</span> <span class="f">match</span><span class="b1">(</span><span class="b2">(</span><span class="v">pattern</span> <span class="k">+</span> <span class="n">2</span><span class="b2">)</span>, <span class="b2">(</span><span class="v">text</span><span class="b2">)</span><span class="b1">)</span>;</div>
<div class="ln num" style="left:921px;width:31px;top:328px">20</div><div class="ln" style="left:978px;top:328px">        <span class="b3">}</span></div>
<div class="ln num" style="left:921px;width:31px;top:347px">21</div><div class="ln" style="left:978px;top:347px"></div>
<div class="ln num" style="left:921px;width:31px;top:366px">22</div><div class="ln" style="left:978px;top:366px">    <span class="b2">}</span></div>
<div class="ln num" style="left:921px;width:31px;top:385px">23</div><div class="ln" style="left:978px;top:385px">    <span class="k">if</span><span class="b2">(</span><span class="v">text</span><span class="b3">[</span>i<span class="b3">]</span> <span class="k">==</span> <span class="v">pattern</span><span class="b3">[</span>i<span class="b3">]</span> <span class="e">||</span> <span class="v">pattern</span><span class="b3">[</span>i<span class="b3">]</span> <span class="k">==</span> <span class="s">'</span><span class="s">.</span><span class="s">'</span><span class="b2">)</span><span class="b2">{</span></div>
<div class="ln num" style="left:921px;width:31px;top:404px">24</div><div class="ln" style="left:978px;top:404px">        <span class="k">return</span> <span class="f">match</span><span class="b3">(</span><span class="b1">(</span><span class="v">pattern</span> <span class="k">+</span> <span class="n">1</span><span class="b1">)</span>, <span class="b1">(</span><span class="v">text</span> <span class="k">+</span> <span class="n">1</span><span class="b1">)</span><span class="b3">)</span>;</div>
<div class="ln num" style="left:921px;width:31px;top:423px">25</div><div class="ln" style="left:978px;top:423px">    <span class="b2">}</span></div>
<div class="ln num" style="left:921px;width:31px;top:442px">26</div><div class="ln" style="left:978px;top:442px"></div>
<div class="ln num" style="left:921px;width:31px;top:461px">27</div><div class="ln" style="left:978px;top:461px">    <span class="k">return</span> <span class="n">false</span>;</div>
<div class="ln num" style="left:921px;width:31px;top:480px">28</div><div class="ln" style="left:978px;top:480px"></div>
<div class="ln num act" style="left:921px;width:31px;top:499px">29</div><div class="ln blame" style="left:1027.7px;top:499px">You, 1 second ago • Uncommitted changes</div>
<div class="ln num" style="left:921px;width:31px;top:518px">30</div><div class="ln" style="left:978px;top:518px"></div>
<div class="ln num" style="left:921px;width:31px;top:537px">31</div>
<div class="abs" style="left:978px;top:499px;width:2px;height:19px;background:#528bff"></div>
</body>
</html>
